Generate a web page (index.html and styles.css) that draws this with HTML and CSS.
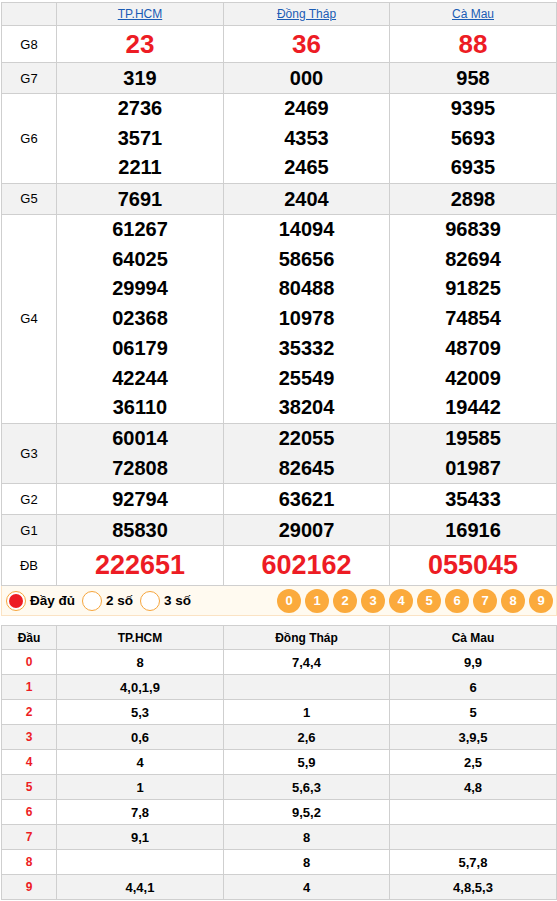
FILE: index.html
```html
<!DOCTYPE html>
<html lang="vi">
<head>
<meta charset="utf-8">
<title>XSMN</title>
<link rel="stylesheet" href="styles.css">
</head>
<body>
<div class="page">
  <table class="kq">
    <tr class="head">
      <td class="lbl"></td>
      <td><a href="#">TP.HCM</a></td>
      <td><a href="#">Đồng Tháp</a></td>
      <td><a href="#">Cà Mau</a></td>
    </tr>
    <tr class="g8">
      <td class="lbl">G8</td>
      <td><div class="n">23</div></td>
      <td><div class="n">36</div></td>
      <td><div class="n">88</div></td>
    </tr>
    <tr class="alt">
      <td class="lbl">G7</td>
      <td><div class="n">319</div></td>
      <td><div class="n">000</div></td>
      <td><div class="n">958</div></td>
    </tr>
    <tr class="multi">
      <td class="lbl">G6</td>
      <td><div class="n">2736</div><div class="n">3571</div><div class="n">2211</div></td>
      <td><div class="n">2469</div><div class="n">4353</div><div class="n">2465</div></td>
      <td><div class="n">9395</div><div class="n">5693</div><div class="n">6935</div></td>
    </tr>
    <tr class="alt">
      <td class="lbl">G5</td>
      <td><div class="n">7691</div></td>
      <td><div class="n">2404</div></td>
      <td><div class="n">2898</div></td>
    </tr>
    <tr class="multi g4">
      <td class="lbl">G4</td>
      <td><div class="n">61267</div><div class="n">64025</div><div class="n">29994</div><div class="n">02368</div><div class="n">06179</div><div class="n">42244</div><div class="n">36110</div></td>
      <td><div class="n">14094</div><div class="n">58656</div><div class="n">80488</div><div class="n">10978</div><div class="n">35332</div><div class="n">25549</div><div class="n">38204</div></td>
      <td><div class="n">96839</div><div class="n">82694</div><div class="n">91825</div><div class="n">74854</div><div class="n">48709</div><div class="n">42009</div><div class="n">19442</div></td>
    </tr>
    <tr class="alt multi g3">
      <td class="lbl">G3</td>
      <td><div class="n">60014</div><div class="n">72808</div></td>
      <td><div class="n">22055</div><div class="n">82645</div></td>
      <td><div class="n">19585</div><div class="n">01987</div></td>
    </tr>
    <tr>
      <td class="lbl">G2</td>
      <td><div class="n">92794</div></td>
      <td><div class="n">63621</div></td>
      <td><div class="n">35433</div></td>
    </tr>
    <tr class="alt">
      <td class="lbl">G1</td>
      <td><div class="n">85830</div></td>
      <td><div class="n">29007</div></td>
      <td><div class="n">16916</div></td>
    </tr>
    <tr class="db">
      <td class="lbl">ĐB</td>
      <td><div class="n">222651</div></td>
      <td><div class="n">602162</div></td>
      <td><div class="n">055045</div></td>
    </tr>
  </table>

  <div class="bar">
    <div class="opts">
      <label class="opt"><span class="radio on"><span class="dot"></span></span><span class="otext">Đầy đủ</span></label>
      <label class="opt"><span class="radio"></span><span class="otext">2 số</span></label>
      <label class="opt"><span class="radio"></span><span class="otext">3 số</span></label>
    </div>
    <div class="balls">
      <span class="ball">0</span><span class="ball">1</span><span class="ball">2</span><span class="ball">3</span><span class="ball">4</span><span class="ball">5</span><span class="ball">6</span><span class="ball">7</span><span class="ball">8</span><span class="ball">9</span>
    </div>
  </div>

  <table class="loto">
    <tr class="head">
      <td>Đầu</td><td>TP.HCM</td><td>Đồng Tháp</td><td>Cà Mau</td>
    </tr>
    <tr><td class="d">0</td><td>8</td><td>7,4,4</td><td>9,9</td></tr>
    <tr class="alt"><td class="d">1</td><td>4,0,1,9</td><td></td><td>6</td></tr>
    <tr><td class="d">2</td><td>5,3</td><td>1</td><td>5</td></tr>
    <tr class="alt"><td class="d">3</td><td>0,6</td><td>2,6</td><td>3,9,5</td></tr>
    <tr><td class="d">4</td><td>4</td><td>5,9</td><td>2,5</td></tr>
    <tr class="alt"><td class="d">5</td><td>1</td><td>5,6,3</td><td>4,8</td></tr>
    <tr><td class="d">6</td><td>7,8</td><td>9,5,2</td><td></td></tr>
    <tr class="alt"><td class="d">7</td><td>9,1</td><td>8</td><td></td></tr>
    <tr><td class="d">8</td><td></td><td>8</td><td>5,7,8</td></tr>
    <tr class="alt"><td class="d">9</td><td>4,4,1</td><td>4</td><td>4,8,5,3</td></tr>
  </table>
</div>
</body>
</html>
```

FILE: styles.css
```css
* { box-sizing: border-box; }
html, body { margin: 0; padding: 0; background: #fff; }
body {
  font-family: "Liberation Sans", Arial, sans-serif;
  color: #000;
}
.page {
  width: 556px;
  margin-left: 1px;
  padding-top: 2px;
}
table {
  width: 556px;
  border-collapse: separate;
  border-spacing: 0;
  table-layout: fixed;
  border-top: 1px solid #cfcfcf;
  border-left: 1px solid #cfcfcf;
}
td {
  padding: 0;
  border-right: 1px solid #cfcfcf;
  border-bottom: 1px solid #cfcfcf;
  text-align: center;
  vertical-align: middle;
}
td:nth-child(1) { width: 55px; }
td:nth-child(2) { width: 167px; }
td:nth-child(3) { width: 166px; }
td:nth-child(4) { width: 167px; }

.kq .head td { background: #f2f2f2; height: 23px; font-size: 12px; }
.kq .head a { color: #1a5cb5; text-decoration: underline; }
.alt td { background: #f2f2f2; }
.lbl { font-size: 13px; }

.n {
  font-weight: bold;
  font-size: 20px;
  height: 30px;
  line-height: 30px;
}
.multi .n { height: 29.67px; line-height: 29.67px; }
.g4 .n { height: 29.72px; line-height: 29.72px; }
.g3 .n { height: 29.5px; line-height: 29.5px; }
.g8 .n { font-size: 26px; height: 36px; line-height: 36px; color: #ed1c24; }
.db .n { font-size: 27px; height: 39px; line-height: 39px; color: #ed1c24; }

.bar {
  display: flex;
  align-items: center;
  justify-content: space-between;
  height: 30px;
  background: #fffaf0;
  border-left: 1px solid #fbe3c4;
  border-right: 1px solid #fbe3c4;
  border-bottom: 1px solid #fbe3c4;
  padding: 0 3px 0 4px;
}
.opts { display: flex; align-items: center; }
.opt { display: flex; align-items: center; margin-right: 7px; cursor: pointer; }
.radio {
  width: 20px;
  height: 20px;
  border-radius: 50%;
  border: 1px solid #f6a53c;
  background: #fff;
  display: flex;
  align-items: center;
  justify-content: center;
}
.dot {
  width: 14px;
  height: 14px;
  border-radius: 50%;
  background: #ed1c24;
}
.otext {
  margin-left: 4px;
  font-weight: bold;
  font-size: 13.5px;
}
.balls { display: flex; gap: 4px; }
.ball {
  width: 24px;
  height: 24px;
  border-radius: 50%;
  background: #fbaa3c;
  color: #fff;
  font-weight: bold;
  font-size: 13px;
  line-height: 24px;
  text-align: center;
}

.loto { margin-top: 9px; }
.loto td { height: 25px; font-size: 13px; font-weight: bold; }
.loto .head td { background: #f2f2f2; height: 24px; font-size: 12px; }
.loto .d { color: #ed1c24; font-size: 12px; }
```
